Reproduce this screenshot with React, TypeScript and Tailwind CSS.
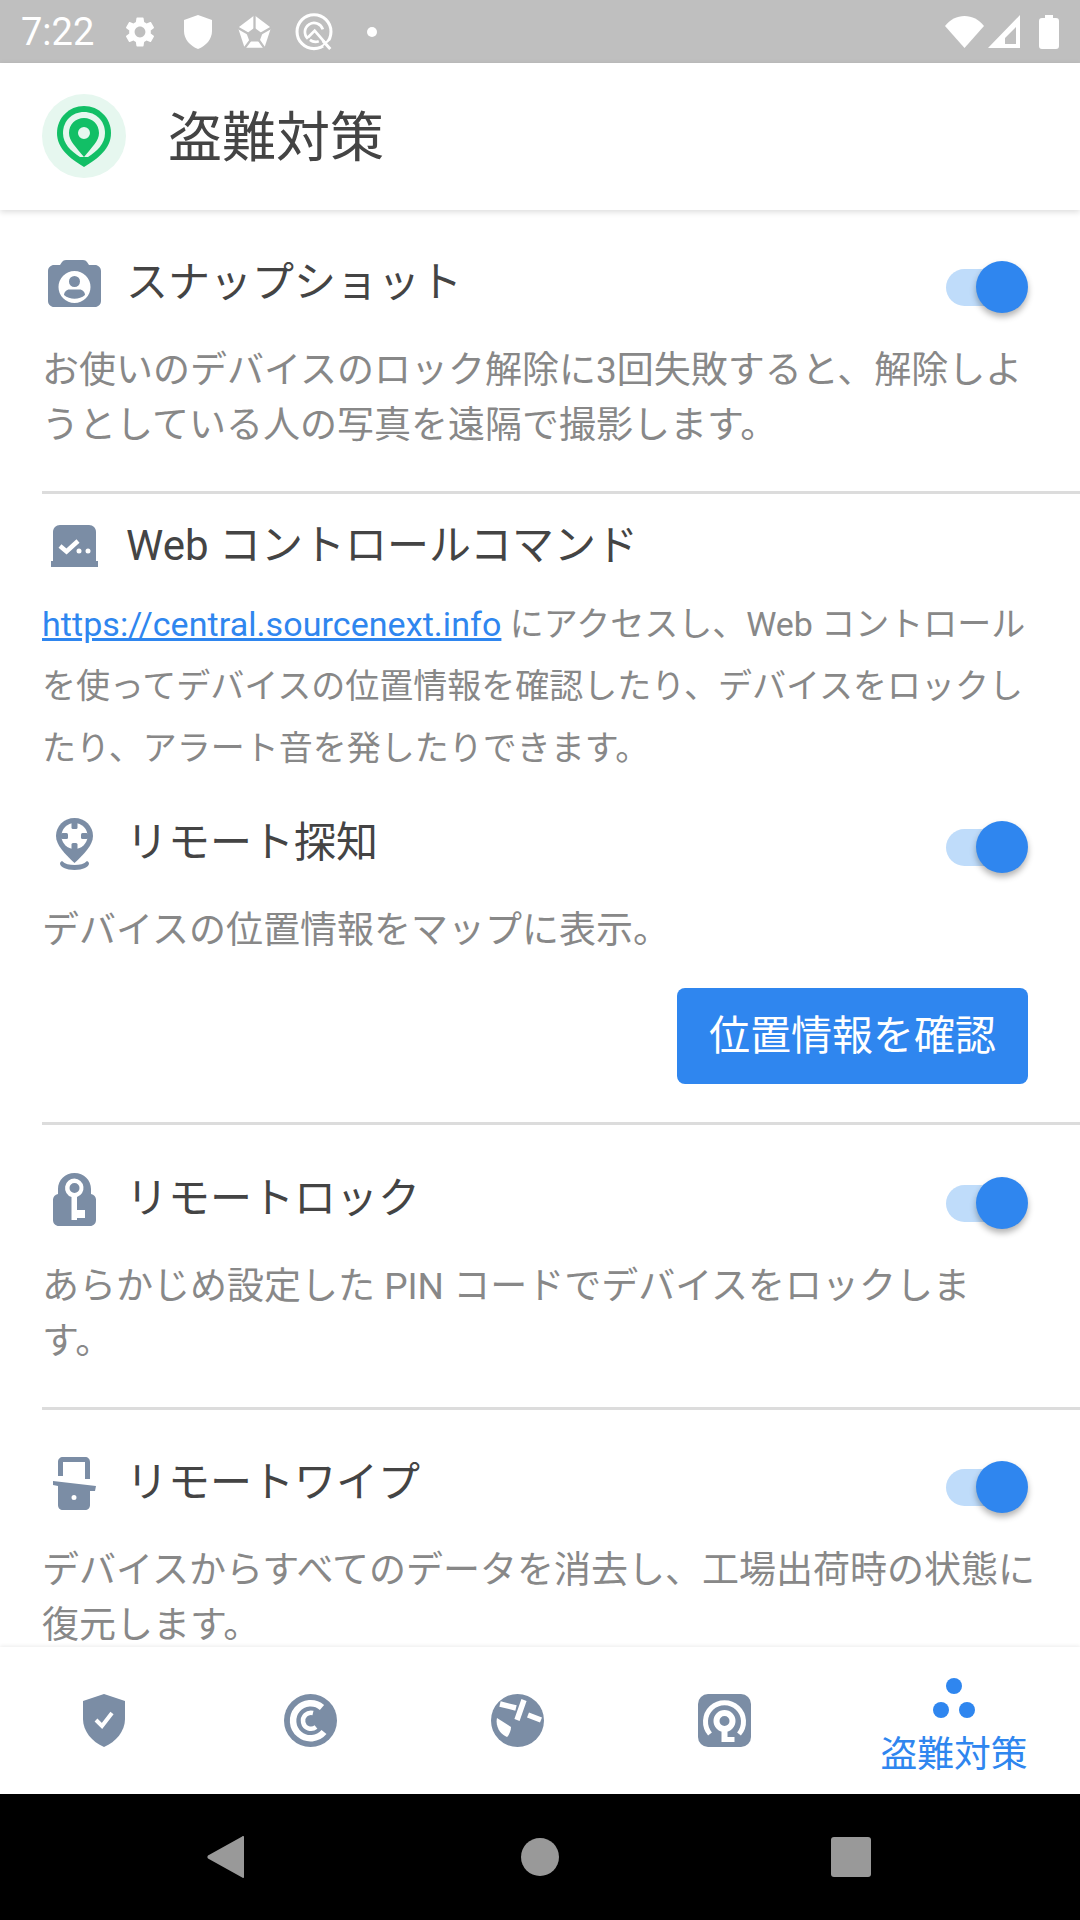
import { ReactNode } from 'react';

const iconColor = '#7b8da5';

const Switch = () => (
  <div className="relative w-[82px] h-[52px] shrink-0">
    <div className="absolute left-0 top-[8px] w-[74px] h-[37px] rounded-full bg-[#bfdcfa]" />
    <div className="absolute right-0 top-0 w-[52px] h-[52px] rounded-full bg-[#2f86ef] shadow-[0_4px_6px_rgba(0,0,0,0.3)]" />
  </div>
);

const Row = ({ icon, title }: { icon: ReactNode; title: string }) => (
  <div className="flex items-center justify-between h-[52px] pl-[42px] pr-[52px]">
    <div className="flex items-center">
      <div className="w-[64px] mr-[20px] pb-[7px] flex justify-center">{icon}</div>
      <span className="text-[42px] leading-[52px] text-[#444444] pb-[8px]">{title}</span>
    </div>
    <Switch />
  </div>
);

const Desc = ({ children, className = '' }: { children: ReactNode; className?: string }) => (
  <p className={`pl-[42px] pr-[38px] text-[37px] leading-[55px] text-[#888888] ${className}`}>{children}</p>
);

const Divider = () => <div className="ml-[42px] h-[3px] bg-[#dcdcdc]" />;

const CameraIcon = () => (
  <svg width="53" height="47" viewBox="0 0 53 47">
    <path fill={iconColor} fillRule="evenodd" d="M6 5h6l2-3c1-1.300 2-2 4-2h17c2 0 3 .7 4 2l2 3h6c3 0 6 2.500 6 6v30c0 3.500-3 6-6 6H6c-3 0-6-2.500-6-6V11c0-3.500 3-6 6-6zM26.500 11a16 16 0 1 0 0 32 16 16 0 0 0 0-32z" />
    <circle cx="26.500" cy="21.500" r="5.500" fill={iconColor} />
    <path fill={iconColor} d="M16 35c0-3 2.500-5.500 5.500-5.500h10c3 0 5.500 2.500 5.500 5.500-3 2.500-6.500 3.800-10.500 3.800S19 37.500 16 35z" />
  </svg>
);

const WebIcon = () => (
  <svg width="47" height="42" viewBox="0 0 47 42">
    <path fill={iconColor} d="M9 0h29c4 0 7 3 7 7v31H2V7c0-4 3-7 7-7z" />
    <rect x="0" y="36" width="47" height="6" fill={iconColor} />
    <path fill="none" stroke="#fff" strokeWidth="4.500" d="M9 21l6.500 5.500L27 16" />
    <circle cx="28" cy="26" r="2.500" fill="#fff" />
    <circle cx="37" cy="26" r="2.500" fill="#fff" />
  </svg>
);

const LocateIcon = () => (
  <svg width="37" height="52" viewBox="0 0 37 52">
    <path fill={iconColor} d="M18.500 0C8 0 0 8 0 18c0 9 9 18 18.500 27C28 36 37 27 37 18 37 8 29 0 18.500 0z" />
    <circle cx="18.500" cy="18" r="13" fill="#fff" />
    <rect x="15.500" y="4" width="6" height="7" rx="1.500" fill={iconColor} />
    <rect x="15.500" y="25" width="6" height="7" rx="1.500" fill={iconColor} />
    <rect x="5" y="15" width="7" height="6" rx="1.500" fill={iconColor} />
    <rect x="25" y="15" width="7" height="6" rx="1.500" fill={iconColor} />
    <path fill={iconColor} d="M6 43c3 3 7.500 4 12.500 4S28 46 31 43c1 .5 2 1.500 2 2.500C33 49 27 52 18.500 52S4 49 4 45.500C4 44.500 5 43.500 6 43z" />
  </svg>
);

const LockIcon = () => (
  <svg width="43" height="53" viewBox="0 0 43 53">
    <path fill={iconColor} d="M5 21V16C5 7 12 0 21.500 0S38 7 38 16v5c3 .5 5 3 5 5.500V47c0 3.500-2.500 6-6 6H6c-3.500 0-6-2.500-6-6V26.500C0 24 2 21.500 5 21z" />
    <path fill="#fff" fillRule="evenodd" d="M21.500 5.500a9.500 9.500 0 0 0-3 18.500V47H24v-2h8v-8h-8V24a9.500 9.500 0 0 0-2.500-18.500zm0 4.500a5 5 0 1 1 0 10 5 5 0 0 1 0-10z" />
  </svg>
);

const WipeIcon = () => (
  <svg width="43" height="53" viewBox="0 0 43 53">
    <path fill={iconColor} d="M5 19V5c0-3 2-5 5-5h22c3 0 5 2 5 5v17h-5V5H10v14z" />
    <path fill={iconColor} fillRule="evenodd" d="M0 24l43 5-1 5h-5v14c0 3-2 5-5 5H10c-3 0-5-2-5-5V29l-5-1zM21 38a2.500 2.500 0 1 0 0 5 2.500 2.500 0 0 0 0-5z" />
  </svg>
);

const ShieldNav = () => (
  <svg width="42" height="53" viewBox="0 0 42 53">
    <path fill={iconColor} d="M21 0l21 7v18c0 12-9 23-21 28C9 48 0 37 0 25V7z" />
    <path fill="none" stroke="#fff" strokeWidth="4" d="M13 26l6 6 10-13" />
  </svg>
);

const CircleCNav = () => (
  <svg width="53" height="53" viewBox="0 0 53 53">
    <circle cx="26.500" cy="26.500" r="26.500" fill={iconColor} />
    <path fill="none" stroke="#fff" strokeWidth="6.500" d="M38 13.500A17.500 17.500 0 1 0 40 38" />
    <path fill="none" stroke="#fff" strokeWidth="4.500" d="M29 19A8 8 0 1 0 32 33" />
  </svg>
);

const DiscNav = () => (
  <svg width="53" height="53" viewBox="0 0 53 53">
    <circle cx="26.500" cy="26.500" r="26.500" fill={iconColor} />
    <path fill="none" stroke="#fff" strokeWidth="5.500" d="M9 10l16 4M33 6l-7 20M37 21l13 5" />
    <path fill="#fff" d="M6 24l14 9c0 4-2 8-4 10C10 41 4 33 6 24z" />
  </svg>
);

const TargetNav = () => (
  <svg width="53" height="53" viewBox="0 0 53 53">
    <rect width="53" height="53" rx="10" fill={iconColor} />
    <path fill="none" stroke="#fff" strokeWidth="5" d="M12 40A19 19 0 1 1 41 40" />
    <circle cx="26.500" cy="27" r="8" fill="none" stroke="#fff" strokeWidth="6" />
    <path fill="#fff" d="M23.500 33h6v10h7v5h-13z" />
  </svg>
);

export default function App() {
  return (
    <div className="w-[1080px] h-[1920px] flex flex-col bg-white font-['Roboto','Noto_Sans_CJK_JP',sans-serif] overflow-hidden">
      {/* status bar */}
      <div className="h-[63px] shrink-0 bg-[#bfbfbf] flex items-center justify-between pl-[21px] pr-[21px] text-white">
        <div className="flex items-center">
          <span className="text-[38px] leading-[40px] w-[71px] font-normal">7:22</span>
          <svg width="36" height="36" viewBox="0 0 24 24" className="ml-[30px]" fill="#fff">
            <path d="M19.14 12.94c.04-.3.06-.61.06-.94 0-.32-.02-.64-.07-.94l2.03-1.58c.18-.14.23-.41.12-.61l-1.92-3.32c-.12-.22-.37-.29-.59-.22l-2.39.96c-.5-.38-1.03-.7-1.62-.94l-.36-2.54c-.04-.24-.24-.41-.48-.41h-3.84c-.24 0-.43.17-.47.41l-.36 2.54c-.59.24-1.13.57-1.62.94l-2.39-.96c-.22-.08-.47 0-.59.22L2.74 8.87c-.12.21-.08.47.12.61l2.03 1.58c-.05.3-.09.63-.09.94s.02.64.07.94l-2.03 1.58c-.18.14-.23.41-.12.61l1.92 3.32c.12.22.37.29.59.22l2.39-.96c.5.38 1.03.7 1.62.94l.36 2.54c.05.24.24.41.48.41h3.84c.24 0 .44-.17.47-.41l.36-2.54c.59-.24 1.13-.56 1.62-.94l2.39.96c.22.08.47 0 .59-.22l1.92-3.32c.12-.22.07-.47-.12-.61l-2.01-1.58zM12 15.600c-1.98 0-3.6-1.62-3.6-3.6s1.62-3.6 3.6-3.6 3.6 1.62 3.6 3.6-1.62 3.6-3.6 3.6z" />
          </svg>
          <svg width="28" height="34" viewBox="0 0 28 34" className="ml-[26px]" fill="#fff">
            <path d="M14 0l14 5v11c0 8-6 15-14 18C6 31 0 24 0 16V5z" />
          </svg>
          <svg width="33" height="33" viewBox="12 30 100 98" className="ml-[26px]">
            <path fill="#fff" d="M62 30l50 38-20 60H32L12 68z" />
            <path fill="none" stroke="#bfbfbf" strokeWidth="7" d="M62 26v46M116 66L82 85M94 132L75 105M30 132l20-27M8 66l34 19" />
            <path fill="#bfbfbf" d="M62 68l24 17-9 24H47l-9-24z" />
          </svg>
          <svg width="38" height="38" viewBox="180 20 112 112" className="ml-[24px]" fill="none" stroke="#fff">
            <circle cx="236" cy="75" r="50" strokeWidth="9" />
            <path strokeWidth="8" d="M262 68A27 27 0 1 0 218 96" />
            <path strokeWidth="8" d="M218 92l20-20 38 44" />
            <path strokeWidth="8" d="M224 99c8 6 18 7 26 4" />
            <path stroke="#bfbfbf" strokeWidth="10" d="M266 122l20-16" />
            <path strokeWidth="9" d="M262 102l22 24" />
          </svg>
          <div className="ml-[34px] w-[10px] h-[10px] rounded-full bg-white" />
        </div>
        <div className="flex items-center">
          <svg width="39" height="32" viewBox="0 0 39 32" fill="#fff">
            <path d="M0 10C5 3.500 12 0 19.500 0S34 3.500 39 10L19.500 32z" />
          </svg>
          <svg width="32" height="33" viewBox="0 0 32 33" className="ml-[4px]" fill="#fff" fillRule="evenodd">
            <path d="M32 0v33H0zM28 12L17 23v6h11z" />
          </svg>
          <svg width="20" height="34" viewBox="0 0 20 34" className="ml-[19px]" fill="#fff">
            <path d="M6 0h8v3h3c2 0 3 1 3 3v25c0 2-1 3-3 3H3c-2 0-3-1-3-3V6c0-2 1-3 3-3h3z" />
          </svg>
        </div>
      </div>

      {/* header */}
      <div className="relative z-10 h-[147px] shrink-0 bg-white flex items-center pl-[42px] pb-[1px] shadow-[0_2px_6px_rgba(0,0,0,0.14)]">
        <div className="w-[84px] h-[84px] rounded-full bg-[#e6f7ef] flex items-center justify-center">
          <svg width="54" height="61" viewBox="0 0 54 61">
            <path fill="#12bf66" d="M27 0C12 0 0 12 0 27c0 15 12 25 27 34 15-9 27-19 27-34C54 12 42 0 27 0z" />
            <path fill="#e6f7ef" d="M27 6C15 6 6 15 6 27c0 11 8 18 17 24h8c9-6 17-13 17-24C48 15 39 6 27 6z" />
            <path fill="#12bf66" fillRule="evenodd" d="M27 12c-8.500 0-15 6.500-15 15 0 8 7 14 15 24 8-10 15-16 15-24 0-8.500-6.500-15-15-15zm0 9a6 6 0 1 1 0 12 6 6 0 0 1 0-12z" />
          </svg>
        </div>
        <h1 className="ml-[42px] text-[54px] leading-[60px] font-normal text-[#444444] pt-[6px]">盗難対策</h1>
      </div>

      {/* content */}
      <div className="flex-1 min-h-0 overflow-hidden">
        <section className="pt-[51px] pb-[38px]">
          <Row icon={<CameraIcon />} title="スナップショット" />
          <Desc className="mt-[30px]">お使いのデバイスのロック解除に3回失敗すると、解除しようとしている人の写真を遠隔で撮影します。</Desc>
        </section>
        <Divider />

        <section className="pt-[31px] pb-[38px]">
          <div className="flex items-center pl-[42px] h-[42px]">
            <div className="w-[64px] mr-[20px] flex justify-center"><WebIcon /></div>
            <span className="text-[42px] leading-[52px] text-[#444444]">Web コントロールコマンド</span>
          </div>
          <p className="mt-[26px] pl-[42px] pr-[38px] text-[34px] leading-[62px] text-[#888888]">
            <span className="text-[#2f86ef] underline tracking-[0.07px]">https://central.sourcenext.info</span> にアクセスし、Web コントロールを使ってデバイスの位置情報を確認したり、デバイスをロックしたり、アラート音を発したりできます。
          </p>
          <div className="mt-[42px]">
            <Row icon={<LocateIcon />} title="リモート探知" />
          </div>
          <Desc className="mt-[30px]">デバイスの位置情報をマップに表示。</Desc>
          <div className="mt-[30px] pr-[52px] flex justify-end">
            <button className="w-[351px] h-[96px] pt-[2px] rounded-[8px] bg-[#2f86ef] text-white text-[41px]">位置情報を確認</button>
          </div>
        </section>
        <Divider />

        <section className="pt-[52px] pb-[38px]">
          <Row icon={<LockIcon />} title="リモートロック" />
          <Desc className="mt-[30px]">あらかじめ設定した PIN コードでデバイスをロックしま<br />す。</Desc>
        </section>
        <Divider />

        <section className="pt-[51px]">
          <Row icon={<WipeIcon />} title="リモートワイプ" />
          <Desc className="mt-[30px]">デバイスからすべてのデータを消去し、工場出荷時の状態に復元します。</Desc>
        </section>
      </div>

      {/* bottom nav */}
      <div className="relative h-[147px] shrink-0 bg-white flex shadow-[0_-1px_4px_rgba(0,0,0,0.08)]">
        <div className="w-[207px] flex justify-center pt-[47px]"><ShieldNav /></div>
        <div className="w-[207px] flex justify-center pt-[47px]"><CircleCNav /></div>
        <div className="w-[207px] flex justify-center pt-[47px]"><DiscNav /></div>
        <div className="w-[207px] flex justify-center pt-[47px]"><TargetNav /></div>
        <div className="flex-1 flex flex-col items-center pt-[31px]">
          <svg width="42" height="40" viewBox="0 0 42 40" fill="#2f86ef">
            <circle cx="21" cy="8" r="8" />
            <circle cx="8" cy="32" r="8" />
            <circle cx="34" cy="32" r="8" />
          </svg>
          <span className="mt-[15px] text-[36.75px] leading-[44px] text-[#2f86ef]">盗難対策</span>
        </div>
      </div>

      {/* android nav */}
      <div className="h-[126px] shrink-0 bg-black flex items-center">
        <div className="w-[360px] flex justify-end pr-[116px]">
          <svg width="37" height="42" viewBox="0 0 37 42" fill="#999999">
            <path d="M36 0c.6 0 1 .4 1 1v40c0 .6-.4 1-1 1-.3 0-.6-.1-.8-.4L1 22.500c-.8-.8-.8-2.200 0-3L35.200.4c.2-.3.5-.4.8-.4z" />
          </svg>
        </div>
        <div className="flex-1 flex justify-center">
          <div className="w-[38px] h-[38px] rounded-full bg-[#999999]" />
        </div>
        <div className="w-[360px] flex justify-start pl-[111px]">
          <div className="w-[40px] h-[40px] rounded-[3px] bg-[#999999]" />
        </div>
      </div>
    </div>
  );
}
